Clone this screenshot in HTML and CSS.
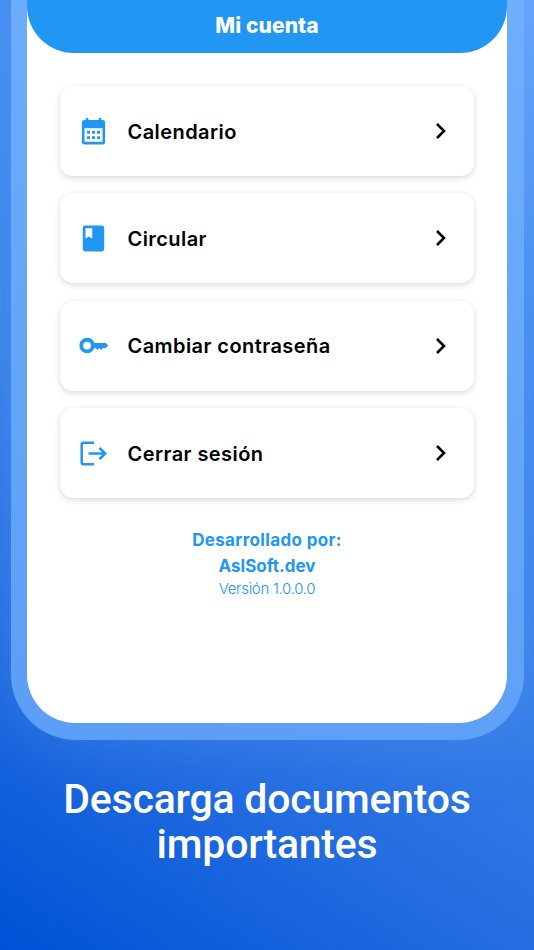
FILE: index.html
```html
<!DOCTYPE html>
<html lang="es">
<head>
  <meta charset="UTF-8" />
  <meta name="viewport" content="width=device-width, initial-scale=1" />
  <title>Mi cuenta</title>
  <link rel="stylesheet" href="styles.css">
</head>
<body>
  <main class="phone">
    <div class="screen">
      <header class="topbar">
        <h1 class="topbar-title">Mi cuenta</h1>
      </header>

      <!-- Opciones -->
      <nav class="menu" aria-label="Opciones de la cuenta">
        <a class="card" href="#">
          <svg class="icon" viewBox="0 0 24 24" aria-hidden="true">
            <path fill-rule="evenodd" d="M6 1.500h2V3h8V1.500h2V3h1a2 2 0 0 1 2 2v15a2 2 0 0 1-2 2H5a2 2 0 0 1-2-2V5a2 2 0 0 1 2-2h1ZM5 9.500V20h14V9.500ZM7 11.500h2.300v2.200H7Zm3.900 0h2.300v2.200h-2.300Zm3.900 0h2.300v2.200h-2.300ZM7 15.700h2.300v2.200H7Zm3.900 0h2.300v2.200h-2.300Zm3.900 0h2.300v2.200h-2.300Z"/>
          </svg>
          <span class="card-title">Calendario</span>
          <svg class="chevron" viewBox="0 0 12 18" aria-hidden="true"><path d="M2 2l7 7-7 7"/></svg>
        </a>
        <a class="card" href="#">
          <svg class="icon" viewBox="0 0 24 24" aria-hidden="true">
            <path fill-rule="evenodd" d="M18.500 2h-13a1.800 1.800 0 0 0-1.800 1.800v16.400A1.800 1.800 0 0 0 5.500 22h13a1.800 1.800 0 0 0 1.800-1.800V3.800A1.800 1.800 0 0 0 18.500 2ZM5.800 4h5.200v8l-2.600-1.500L5.800 12Z"/>
          </svg>
          <span class="card-title">Circular</span>
          <svg class="chevron" viewBox="0 0 12 18" aria-hidden="true"><path d="M2 2l7 7-7 7"/></svg>
        </a>
        <a class="card" href="#">
          <svg class="icon" viewBox="0 0 24 24" aria-hidden="true">
            <path fill-rule="evenodd" d="M7 6a6 6 0 1 0 5.700 8H13.500L15 15.500 16.500 14 18 15.500 19.300 14H21.500L23.500 12 21.500 10H12.700A6 6 0 0 0 7 6Zm0 3a3 3 0 1 1 0 6 3 3 0 0 1 0-6Z"/>
          </svg>
          <span class="card-title">Cambiar contraseña</span>
          <svg class="chevron" viewBox="0 0 12 18" aria-hidden="true"><path d="M2 2l7 7-7 7"/></svg>
        </a>
        <a class="card" href="#">
          <svg class="icon icon-line" viewBox="0 0 31 31" aria-hidden="true">
            <path d="M16 4.700H5.500Q3.700 4.700 3.700 6.500V24.500Q3.700 26.300 5.500 26.300H16M10.500 15.500H27M21.500 9.800L27.200 15.500 21.500 21.200"/>
          </svg>
          <span class="card-title">Cerrar sesión</span>
          <svg class="chevron" viewBox="0 0 12 18" aria-hidden="true"><path d="M2 2l7 7-7 7"/></svg>
        </a>
      </nav>

      <footer class="credits">
        <p class="credits-label">Desarrollado por:</p>
        <p class="credits-name">AslSoft.dev</p>
        <p class="credits-version">Versión 1.0.0.0</p>
      </footer>
    </div>
  </main>

  <h2 class="headline">Descarga documentos<br>importantes</h2>
</body>
</html>
```
FILE: styles.css
```css
*, *::before, *::after {
  box-sizing: border-box;
}

body {
  margin: 0;
  height: 950px;
  overflow: hidden;
  font-family: 'Inter', sans-serif;
  background: linear-gradient(32deg, #0051d7 0%, #256ee1 26%, #3b82e9 50%, #468df0 75%, #65a5fb 100%);
}

h1, h2, p {
  margin: 0;
}

/* Teléfono */
.phone {
  width: 513px;
  height: 739.5px;
  margin: 0 auto;
  padding: 0 16.5px 17px;
  background: linear-gradient(15deg, #5b9ef5 0%, #65a7f9 55%, #70aeff 100%);
  border-radius: 0 0 65px 65px;
  box-shadow: 0 0 70px rgba(105, 165, 250, 0.3);
}

.screen {
  height: 100%;
  overflow: hidden;
  background: #fff;
  border-radius: 0 0 48px 48px;
}

.topbar {
  height: 52.5px;
  padding-top: 11px;
  background: #2196f3;
  border-radius: 0 0 47px 47px;
  text-align: center;
}

.topbar-title {
  color: #fff;
  font-size: 21px;
  font-weight: 800;
  line-height: 30px;
  letter-spacing: 0.1px;
}

/* Opciones */
.menu {
  display: flex;
  flex-direction: column;
  gap: 17.4px;
  padding: 33.5px 33.5px 0 33px;
}

.card {
  display: flex;
  align-items: center;
  height: 90px;
  padding: 0 27px 0 18px;
  background: #fff;
  border-radius: 13px;
  box-shadow: 0 2px 6px rgba(0, 0, 0, 0.15), 0 0 2px rgba(0, 0, 0, 0.03);
  color: #000;
  text-decoration: none;
}

.icon {
  width: 31px;
  height: 31px;
  margin-right: 18.5px;
  fill: #2196f3;
}

.icon-line {
  fill: none;
  stroke: #2196f3;
  stroke-width: 2.5;
}

.card-title {
  flex: 1;
  padding-top: 1px;
  font-size: 20px;
  font-weight: 600;
  letter-spacing: 0.43px;
}

.chevron {
  width: 12px;
  height: 18px;
  fill: none;
  stroke: #000;
  stroke-width: 2.6;
}

/* Créditos */
.credits {
  padding-top: 29px;
  color: #2196f3;
  text-align: center;
}

.credits-label,
.credits-name {
  font-size: 17px;
  font-weight: 700;
  line-height: 26px;
}

.credits-label {
  letter-spacing: 0.35px;
}

.credits-version {
  font-size: 15px;
  font-weight: 300;
  line-height: 20px;
  letter-spacing: -0.3px;
}

/* Titular */
.headline {
  margin-top: 37px;
  color: #fff;
  font-family: 'Roboto', sans-serif;
  font-size: 41px;
  font-weight: 500;
  line-height: 45px;
  letter-spacing: -0.22px;
  text-align: center;
}
```
